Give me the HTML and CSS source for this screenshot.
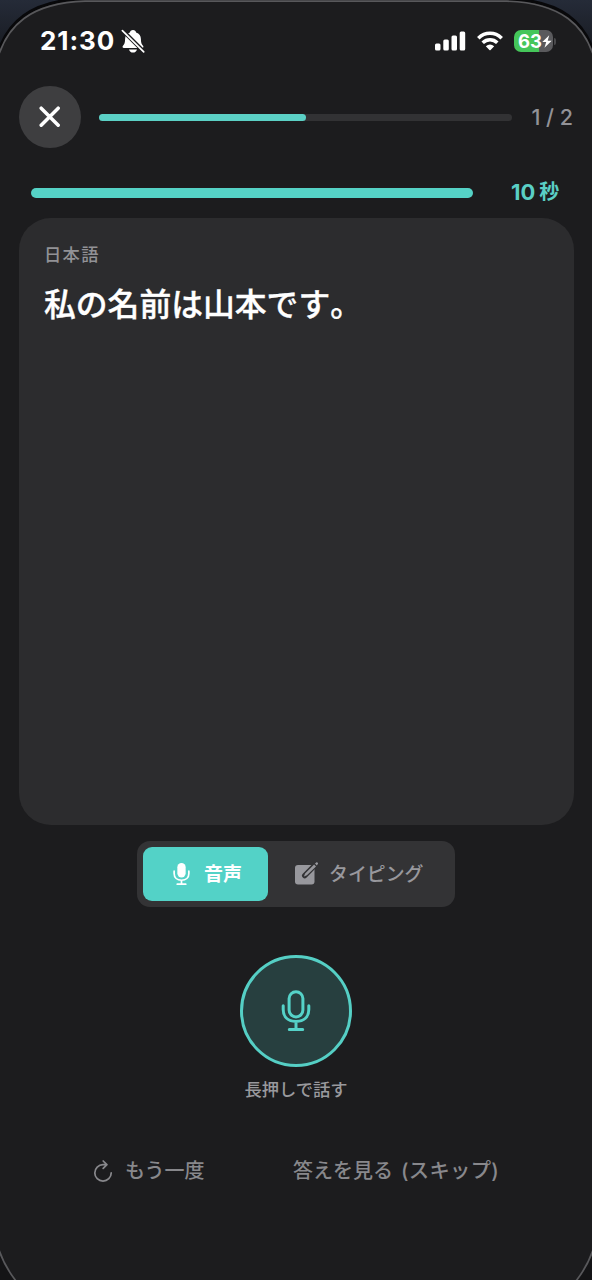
FILE: index.html
```html
<!DOCTYPE html>
<html lang="ja">
<head>
<meta charset="utf-8">
<meta name="viewport" content="width=device-width">
<title>スピーキング練習</title>
<link rel="stylesheet" href="styles.css">
</head>
<body>
<main class="screen">
  <svg class="bezel" viewBox="0 0 592 1280" aria-hidden="true">
    <defs><linearGradient id="corner" x1="0" y1="0" x2="0" y2="1"><stop offset="0" stop-color="#252b38"/><stop offset="1" stop-color="#191c23"/></linearGradient></defs>
    <path fill="url(#corner)" d="M0 0H76C28 2 9 25 0 47ZM592 0H516C564 2 583 25 592 47Z"/>
    <path fill="#141416" d="M0 1255L15 1280H0ZM592 1255L577 1280H592Z"/>
    <path class="bezel-shade" d="M-1 50C8 25 28 0 85-1H507C564 0 584 25 593 50"/>
    <path class="bezel-line" d="M-1 54C8 28 28 3 85 1.2H507C564 3 584 28 593 54M-1 1250C3 1262 9 1272 16 1281M593 1250C589 1262 583 1272 576 1281"/>
  </svg>

  <header class="status">
    <span class="clock">21:30</span>
    <svg class="bell" viewBox="0 0 24 24"><path fill="#fff" d="M12 1C13.800 1 14.900 2.100 15.100 3.600C18.400 4.700 19.800 7 19.900 10C20 13.700 20.500 15.100 22 16.700C22.900 17.700 22.400 19 21.100 19H2.900C1.600 19 1.100 17.700 2 16.700C3.500 15.100 4 13.700 4.100 10C4.200 7 5.600 4.700 8.900 3.600C9.100 2.100 10.200 1 12 1ZM8 20.500H16C15.500 22.600 14 23.600 12 23.600S8.500 22.600 8 20.500Z"/><path d="M1 .8L24 23.800" stroke="#1c1c1e" stroke-width="4"/><path d="M1.400 1.600L22.700 22.800" stroke="#fff" stroke-width="1.700" stroke-linecap="round"/></svg>
    <div class="status-icons">
      <svg class="signal" viewBox="0 0 31 20" fill="#fff"><rect x="0" y="12.500" width="5.500" height="7" rx="1.500"/><rect x="8.300" y="8.500" width="5.500" height="11" rx="1.500"/><rect x="16.500" y="4.500" width="5.500" height="15" rx="1.500"/><rect x="24.700" y=".4" width="5.500" height="19.100" rx="1.500"/></svg>
      <svg class="wifi" viewBox="0 0 26 20" fill="none" stroke="#fff" stroke-width="3.600"><path d="M1.300 7.200C8 .6 18 .6 24.700 7.200"/><path d="M5.700 11.700C9.900 7.700 16.100 7.700 20.300 11.700"/><path fill="#fff" stroke="none" d="M8.800 15.300Q13 11.700 17.200 15.300L13.600 18.900Q13 19.500 12.400 18.900Z"/></svg>
      <span class="battery"><span class="battery-body"><span class="battery-text">63</span><svg class="bolt" viewBox="0 0 10 13"><path fill="#fff" d="M7.200.2L.3 7H4.200L2.500 12.800L9.700 5.700H5.700Z"/></svg></span><span class="battery-cap"></span></span>
    </div>
  </header>

  <div class="lesson-bar">
    <button class="close" aria-label="閉じる"><svg viewBox="0 0 22 22"><path d="M2.200 2.200L19.200 19.200M19.200 2.200L2.200 19.200" stroke="#fff" stroke-width="3.500" stroke-linecap="round"/></svg></button>
    <div class="progress"><div class="progress-fill"></div></div>
    <span class="count">1 / 2</span>
  </div>

  <div class="timer">
    <div class="timer-track"></div>
    <span class="timer-text"><span>10</span><span class="unit">秒</span></span>
  </div>

  <section class="card">
    <div class="language">日本語</div>
    <div class="sentence">私の名前は山本です。</div>
  </section>

  <div class="modes">
    <button class="mode active">
      <svg class="mode-mic" viewBox="0 0 18 24"><rect x="4.600" y=".4" width="8.800" height="15.200" rx="4.400" fill="#fff"/><path d="M1.200 9V11.500C1.200 16 4.400 18.600 9 18.600S16.800 16 16.800 11.500V9M9 18.600V22.700M4.500 22.800H13.500" fill="none" stroke="#fff" stroke-width="1.800" stroke-linecap="round"/></svg>
      <span class="voice-label">音声</span>
    </button>
    <button class="mode">
      <svg class="compose" viewBox="0 0 25 25"><rect x="1" y="4" width="19.500" height="19.500" rx="3" fill="#98989d"/><path d="M10.700 14.600L22 3.100" stroke="#333335" stroke-width="5.400" stroke-linecap="round"/><path d="M9.900 15.400L11.100 12.500L20.100 3.500L22 5.400L12.900 14.300ZM21 2.600L22.200 1.500C23.200.6 24.700 2.100 23.800 3.100L22.800 4.400Z" fill="#98989d"/></svg>
      <span class="typing-label">タイピング</span>
    </button>
  </div>

  <div class="record">
    <button class="mic-button" aria-label="長押しで話す"><svg viewBox="0 0 30 42" fill="none" stroke="#55d2c8" stroke-width="3" stroke-linecap="round"><rect x="8.100" y="1.700" width="13.800" height="25.200" rx="6.900"/><path d="M2.200 15.700V19.500C2.200 27 7 31.400 15 31.400S27.800 27 27.800 19.500V15.700M15 31.400V39.500M8.300 39.500H21.700"/></svg></button>
    <div class="hint">長押しで話す</div>
  </div>

  <footer class="actions">
    <span class="again"><svg viewBox="0 0 20 22" fill="none" stroke="#88888c" stroke-width="1.700" stroke-linecap="round" stroke-linejoin="round"><path d="M13.800 4.700H10A8.200 8.200 0 1 0 18.200 12.900M10.200 1L13.900 4.700L10.200 8.400"/></svg><span class="again-label">もう一度</span></span>
    <span class="skip"><span>答えを見る</span><span class="paren">(スキップ)</span></span>
  </footer>
</main>
</body>
</html>
```
FILE: styles.css
```css
* { box-sizing: border-box; }
body { margin: 0; background: #1c1c1e; }
button { border: 0; padding: 0; margin: 0; font: inherit; color: inherit; background: none; }
svg { display: block; flex: none; }

.screen {
  position: relative;
  width: 592px;
  height: 1280px;
  overflow: hidden;
  display: flex;
  flex-direction: column;
  background: #1c1c1e;
  color: #fff;
  font-family: Inter, "Noto Sans CJK JP", sans-serif;
  white-space: nowrap;
}
.bezel { position: absolute; inset: 0; width: 592px; height: 1280px; pointer-events: none; }
.bezel-line { fill: none; stroke: #58585b; stroke-width: 1.7; }
.bezel-shade { fill: none; stroke: #08080a; stroke-width: 3; }

.status { height: 86px; padding: 0 36px 4px 40px; display: flex; align-items: center; }
.clock { width: 75px; font-size: 26px; font-weight: 700; letter-spacing: .9px; line-height: 30px; padding-bottom: 1px; }
.bell { width: 24px; height: 24px; margin-left: 6px; }
.status-icons { margin-left: auto; display: flex; align-items: center; }
.signal { width: 31px; height: 20px; margin-right: 11px; }
.wifi { width: 26px; height: 20px; margin-right: 11px; }
.battery { display: flex; align-items: center; gap: 1px; }
.battery-body {
  width: 39px; height: 22px; border-radius: 7px;
  display: flex; align-items: center; padding-left: 4px;
  background: linear-gradient(90deg, #45c65a 64%, #5a5a5d 64%);
}
.battery-text { width: 24px; font-size: 18.5px; font-weight: 700; line-height: 22px; }
.bolt { width: 10px; height: 13px; }
.battery-cap { width: 2px; height: 7px; border-radius: 0 2px 2px 0; background: #48484b; }

.lesson-bar { height: 62px; padding: 0 19px; display: flex; align-items: center; }
.close { width: 62px; height: 62px; border-radius: 50%; background: #3e3e40; display: grid; place-items: center; }
.close svg { width: 22px; height: 22px; }
.progress { width: 414px; height: 7px; margin-left: 18px; border-radius: 4px; background: #323234; }
.progress-fill { width: 50%; height: 100%; border-radius: 4px; background: #5bd0c5; }
.count { margin-left: 19px; font-size: 21.5px; font-weight: 500; color: #929297; }

.timer { height: 70px; padding: 19px 31px 0; display: flex; align-items: flex-start; }
.timer-track { width: 442px; height: 10px; margin-top: 20.500px; border-radius: 5px; background: #55d2c6; }
.timer-text { height: 30px; margin: 10px 0 0 38px; display: flex; align-items: center; gap: 4px; font-size: 22px; font-weight: 700; line-height: 30px; color: #5acfc5; }
.unit { font-size: 20px; }

.card { width: 555px; height: 607px; flex: none; margin-left: 19px; padding: 25px 25px; border-radius: 32px; background: #2c2c2e; }
.language { font-size: 17.3px; line-height: 24px; letter-spacing: 1.3px; font-weight: 500; color: #929296; }
.sentence { margin-top: 16px; font-size: 31.8px; line-height: 44px; font-weight: 500; font-feature-settings: "palt" 0; font-kerning: none; text-spacing-trim: space-all; -webkit-text-stroke: .35px #fff; }

.modes { width: 318px; height: 66px; flex: none; margin: 15.500px 0 0 137px; padding: 6px; border-radius: 13px; background: #333335; display: flex; align-items: center; }
.mode { height: 54px; display: flex; align-items: center; color: #98989d; }
.mode.active { width: 125px; padding-left: 30px; border-radius: 9px; background: #53d2c7; color: #fff; }
.mode-mic { width: 17px; height: 24px; }
.voice-label { margin-left: 14px; padding-bottom: 3px; font-size: 19px; font-weight: 700; }
.compose { width: 25px; height: 25px; margin-left: 26px; }
.typing-label { margin-left: 10px; padding-bottom: 3px; font-size: 18.9px; font-weight: 500; }

.record { margin-top: 48px; display: flex; flex-direction: column; align-items: center; }
.mic-button { width: 112px; height: 112px; border: 3px solid #55cfc5; border-radius: 50%; background: #273f3f; display: grid; place-items: center; }
.mic-button svg { width: 30px; height: 42px; }
.hint { margin-top: 11.500px; font-size: 17.3px; line-height: 24px; font-weight: 500; color: #99999d; }

.actions { height: 32px; margin-top: 53px; padding-left: 93px; display: flex; align-items: center; color: #88888c; font-size: 20px; line-height: 32px; font-weight: 500; }
.again { width: 200px; display: flex; align-items: center; }
.again svg { width: 20px; height: 22px; }
.again-label { margin-left: 12px; }
.skip { display: flex; gap: 8px; }
.paren { font-size: 20.3px; letter-spacing: .35px; }
```
